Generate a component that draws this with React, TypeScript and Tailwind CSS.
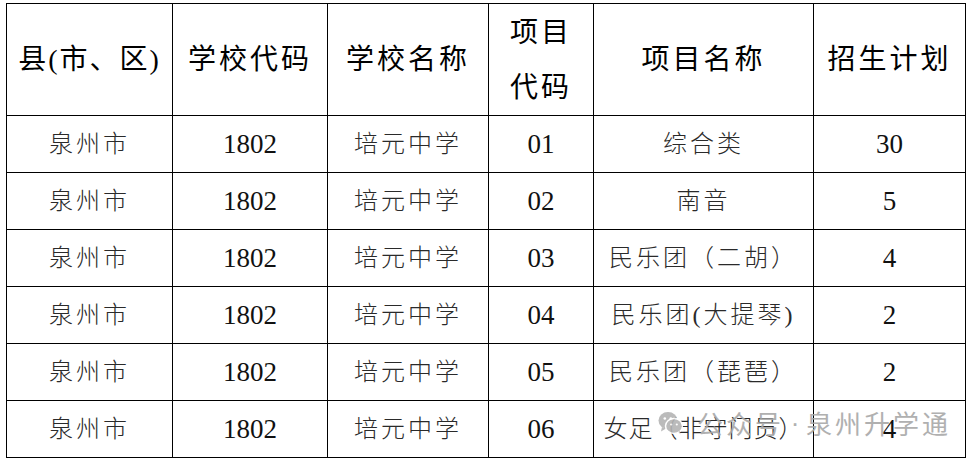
const header = ["县(市、区)", "学校代码", "学校名称", "项目代码", "项目名称", "招生计划"];

const rows = [
  ["泉州市", "1802", "培元中学", "01", "综合类", "30"],
  ["泉州市", "1802", "培元中学", "02", "南音", "5"],
  ["泉州市", "1802", "培元中学", "03", "民乐团（二胡）", "4"],
  ["泉州市", "1802", "培元中学", "04", "民乐团(大提琴)", "2"],
  ["泉州市", "1802", "培元中学", "05", "民乐团（琵琶）", "2"],
  ["泉州市", "1802", "培元中学", "06", "女足（非守门员）", "4"],
];

const isNumber = (s: string) => /^\d+$/.test(s);
// long names with full-width brackets need tighter spacing to fit the cell
const isLong = (s: string) => s.includes("（") && s.length >= 8;

function WeChatIcon() {
  return (
    <svg width="25" height="24" viewBox="0 0 25 24" className="shrink-0">
      <ellipse cx="10" cy="9.5" rx="9.5" ry="8.5" fill="#b4b4b4" />
      <path d="M4 16 L3 20.5 L8 17.5 Z" fill="#b4b4b4" />
      <ellipse cx="16" cy="15" rx="8.5" ry="7.5" fill="#b4b4b4" stroke="#ffffff" strokeWidth="1.5" />
      <path d="M20.5 21 L22.5 23.5 L21.5 19.5 Z" fill="#b4b4b4" />
      <circle cx="6.8" cy="7.5" r="1.3" fill="#ffffff" />
      <circle cx="12.8" cy="7.5" r="1.3" fill="#ffffff" />
      <circle cx="13.2" cy="13.5" r="1.1" fill="#ffffff" />
      <circle cx="18.8" cy="13.5" r="1.1" fill="#ffffff" />
    </svg>
  );
}

export default function App() {
  return (
    <div className="w-[968px] h-[464px] bg-white overflow-hidden font-['Liberation_Serif','Noto_Sans_CJK_SC',serif]">
      <div className="relative ml-[6px] mt-[3px] w-fit">
        <div className="grid w-fit grid-cols-[165px_154px_160px_104px_219px_151px] grid-rows-[111px_repeat(6,56px)] gap-px bg-black p-px">
          {header.map((h, i) => (
            <div
              key={h}
              className="flex items-center justify-center bg-white text-[28px] tracking-[3px] text-black"
            >
              {i === 3 ? (
                <div className="flex flex-col items-center leading-[55px]">
                  <span>项目</span>
                  <span>代码</span>
                </div>
              ) : (
                <span className={i === 0 ? "tracking-[2px]" : ""}>{h}</span>
              )}
            </div>
          ))}
          {rows.map((row, r) =>
            row.map((cell, c) => (
              <div
                key={`${r}-${c}`}
                className={`flex items-center justify-center bg-white ${
                  isNumber(cell)
                    ? "text-[27px] text-[#111]"
                    : `text-[24px] text-[#2a2a2a] font-light ${
                        isLong(cell) ? "tracking-[1px]" : "tracking-[3px]"
                      }`
                }`}
              >
                {cell}
              </div>
            ))
          )}
        </div>

        {/* watermark */}
        <div className="absolute left-[652px] top-[407px] flex items-center gap-[14px] opacity-90">
          <WeChatIcon />
          <div className="flex items-center font-['Noto_Sans_CJK_SC',sans-serif] text-[26px] leading-none tracking-[3px] text-[#a8a8a8]">
            <span>公众号</span>
            <span className="inline-block w-[22px] text-center tracking-normal font-['Liberation_Sans',sans-serif]">·</span>
            <span>泉州升学通</span>
          </div>
        </div>
      </div>
    </div>
  );
}
